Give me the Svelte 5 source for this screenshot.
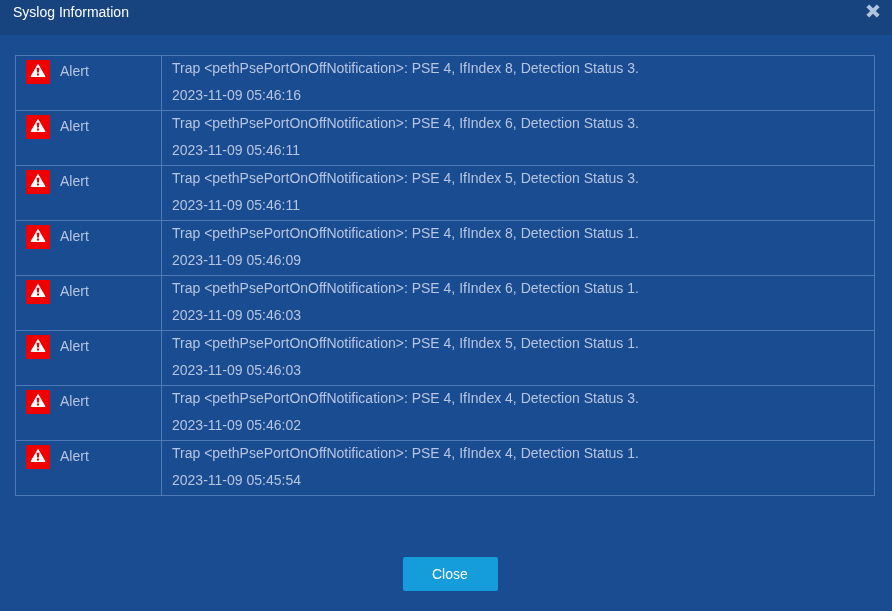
<script>
  const msg = (i, s) => `Trap <pethPsePortOnOffNotification>: PSE 4, IfIndex ${i}, Detection Status ${s}.`;
  const rows = [
    [8, 3, '2023-11-09 05:46:16'],
    [6, 3, '2023-11-09 05:46:11'],
    [5, 3, '2023-11-09 05:46:11'],
    [8, 1, '2023-11-09 05:46:09'],
    [6, 1, '2023-11-09 05:46:03'],
    [5, 1, '2023-11-09 05:46:03'],
    [4, 3, '2023-11-09 05:46:02'],
    [4, 1, '2023-11-09 05:45:54']
  ];
</script>

<div class="dialog">
  <header class="head">
    <span class="title">Syslog Information</span>
    <svg class="x" width="16" height="16" viewBox="0 0 16 16" aria-hidden="true">
      <path d="M2.8 2.8 L13.2 13.2 M13.2 2.8 L2.8 13.2" stroke="#b4c3dc" stroke-width="4" stroke-linecap="butt" />
    </svg>
  </header>
  <div class="list">
    {#each rows as r}
      <div class="row">
        <div class="level">
          <span class="badge">
            <svg width="16" height="15" viewBox="0 0 16 15" aria-hidden="true">
              <path fill="#fff" stroke="#fff" stroke-width="1" stroke-linejoin="round" d="M8 0.5 L15 12.5 H1 Z" />
              <path fill="#f00000" d="M6.7 3.8 H9.3 L8.9 8.4 H7.1 Z M7 9.4 H9 V11.4 H7 Z" />
            </svg>
          </span>
          <span class="label">Alert</span>
        </div>
        <div class="info">
          <div class="line">{msg(r[0], r[1])}</div>
          <div class="line">{r[2]}</div>
        </div>
      </div>
    {/each}
  </div>
  <div class="foot"><button type="button"><span class="cap">Close</span></button></div>
</div>

<style>
  :global(body) { margin: 0; background: #1a4c92; }
  .dialog {
    width: 892px; height: 611px; background: #1a4c92; overflow: hidden;
    font-family: "Liberation Sans", Arial, sans-serif; font-size: 14px; color: #b6c5e0;
  }
  .head {
    height: 35px; background: #17437f; display: flex; justify-content: space-between;
    padding: 0 11px 0 13px; box-sizing: border-box;
  }
  .title { color: #fff; line-height: 25px; font-size: 14px; will-change: transform; }
  .x { margin-top: 3px; }
  .list {
    margin: 20px 17px 0 15px; border: 1px solid #4f78b6; border-bottom: 0;
  }
  .row { display: flex; height: 55px; box-sizing: border-box; border-bottom: 1px solid #4f78b6; }
  .level {
    width: 146px; flex: none; border-right: 1px solid #4f78b6; display: flex; align-items: flex-start;
    padding: 4px 0 0 10px; box-sizing: border-box; gap: 10px; line-height: 21px;
  }
  .badge {
    width: 24px; height: 24px; background: #f00000; display: flex; align-items: flex-start; justify-content: center;
    padding-top: 4px; box-sizing: border-box;
  }
  .label { margin-top: 1px; margin-left: -0.4px; will-change: transform; }
  .info { padding-left: 10px; }
  .line { height: 27px; line-height: 25px; white-space: nowrap; will-change: transform; }
  .foot { display: flex; justify-content: center; margin-top: 61px; padding-left: 8px; }
  button {
    width: 95px; height: 34px; background: #149cdb; border: 0; border-radius: 2px; color: #fff;
    font: inherit; font-size: 14px; padding: 0;
  }
  .cap { display: inline-block; will-change: transform; }
</style>
